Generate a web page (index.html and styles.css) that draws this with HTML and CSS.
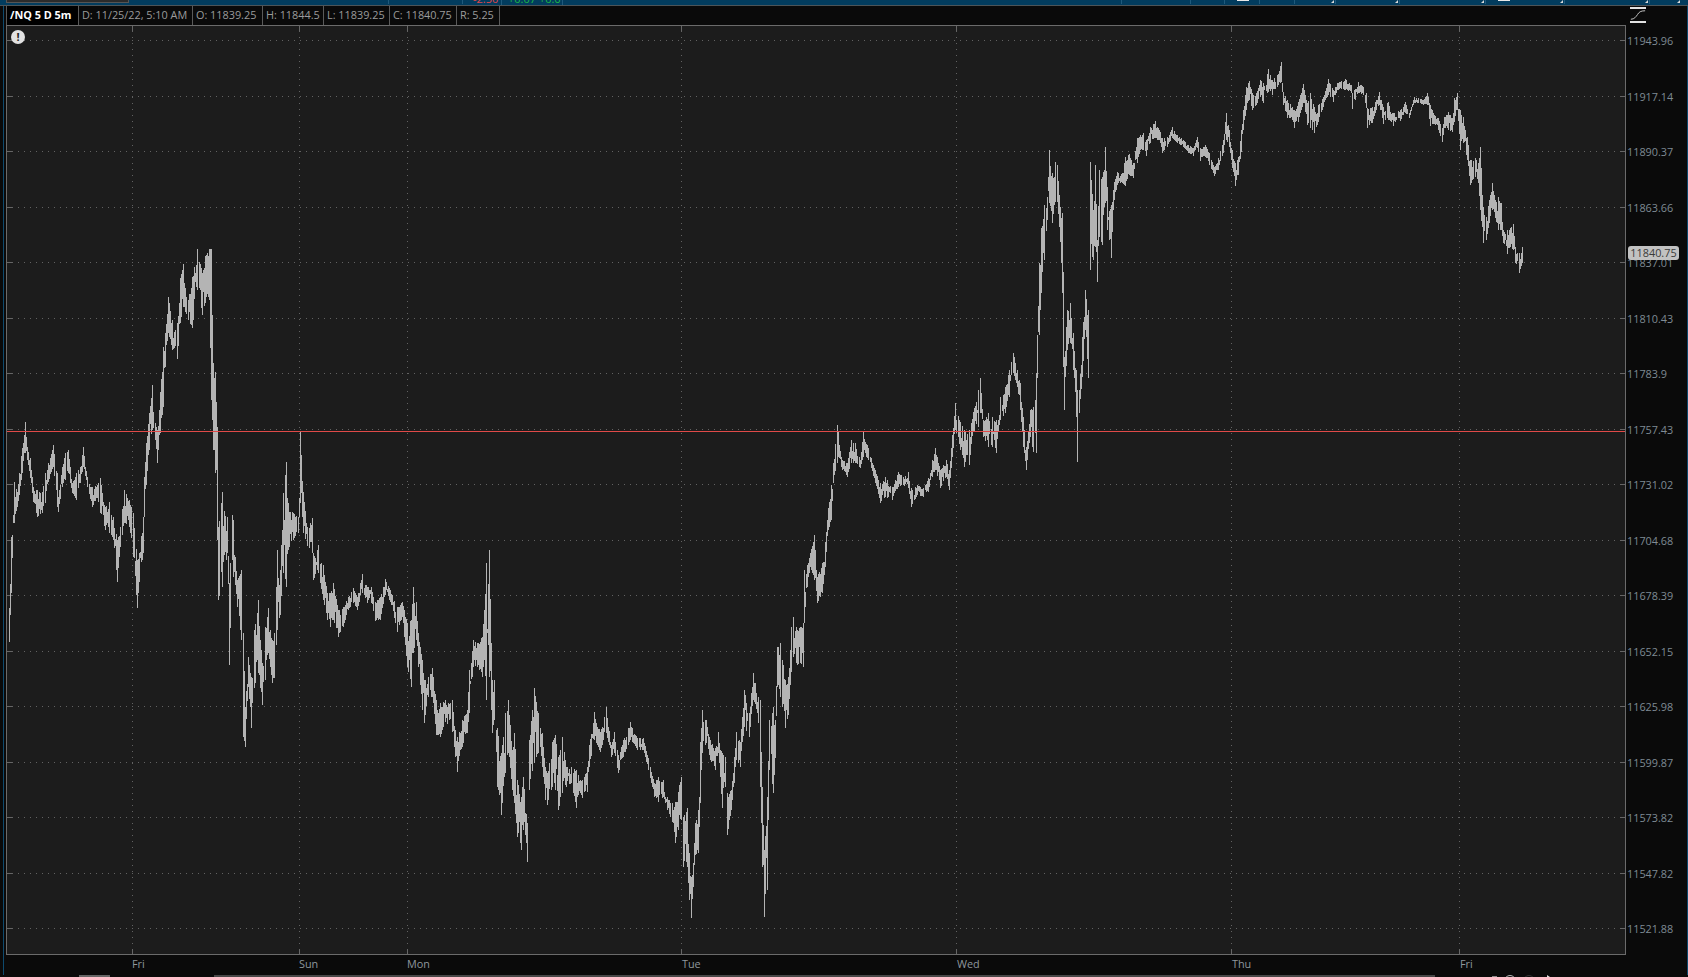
FILE: index.html
```html
<!DOCTYPE html>
<html lang="en">
<head>
<meta charset="utf-8">
<title>/NQ 5 D 5m</title>
<link rel="stylesheet" href="styles.css">
</head>
<body>
<div class="strip">
  <div class="strip-knob"></div>
  <span class="cell s1"></span>
  <span class="cell s2"></span>
  <span class="cell s3 q-red">-2.50</span>
  <span class="cell s4 q-green">+0.07 +0.6</span>
  <span class="cell s5"></span>
  <span class="cell s6"></span>
  <span class="cell s7"></span>
  <span class="cell s8 bar"></span>
  <span class="cell s9"></span>
  <span class="cell s10 mark"></span>
  <span class="cell s11 mark"></span>
  <span class="cell s12 mark"></span>
  <span class="cell s13 bar mark"></span>
  <span class="cell s14 mark"></span>
  <span class="cell s15 mark"></span>
</div>
<div class="main">
  <div class="gutter"></div>
  <div class="chart-col">
    <div class="legend">
      <span class="lg lg-sym">/NQ 5 D 5m</span>
      <span class="lg w-d">D: 11/25/22, 5:10 AM</span>
      <span class="lg w-o">O: 11839.25</span>
      <span class="lg w-h">H: 11844.5</span>
      <span class="lg w-l">L: 11839.25</span>
      <span class="lg w-c">C: 11840.75</span>
      <span class="lg w-r">R: 5.25</span>
    </div>
    <div class="frame">
      <svg id="chart" class="chart" viewBox="7 26 1618 928" width="1618" height="928" aria-hidden="true"></svg>
      <span class="alert">!</span>
    </div>
    <div class="times">
      <span>Fri</span><span>Sun</span><span>Mon</span><span>Tue</span><span>Wed</span><span>Thu</span><span>Fri</span>
    </div>
  </div>
  <div class="axis">
    <svg class="axis-icon" viewBox="0 0 18 17" width="16" height="16" preserveAspectRatio="none" aria-hidden="true">
      <path d="M0 1H18M0 16H18" fill="none" stroke="#e2e2e2" stroke-width="2"/>
      <path d="M1 13C5 13 6.500 10.500 8.500 8C10 5.500 12 4 17 4" fill="none" stroke="#cfcfcf" stroke-width="1"/>
    </svg>
    <span class="price">11943.96</span>
    <span class="price">11917.14</span>
    <span class="price">11890.37</span>
    <span class="price">11863.66</span>
    <span class="price">11837.01</span>
    <span class="price">11810.43</span>
    <span class="price">11783.9</span>
    <span class="price">11757.43</span>
    <span class="price">11731.02</span>
    <span class="price">11704.68</span>
    <span class="price">11678.39</span>
    <span class="price">11652.15</span>
    <span class="price">11625.98</span>
    <span class="price">11599.87</span>
    <span class="price">11573.82</span>
    <span class="price">11547.82</span>
    <span class="price">11521.88</span>
    <span class="last">11840.75</span>
  </div>
</div>
<div class="scroll">
  <span class="thumb"></span>
  <span class="track"></span>
  <svg class="scroll-icons" viewBox="0 0 70 2" width="70" height="2" aria-hidden="true">
    <path d="M12 1.500H17" stroke="#888" fill="none"/>
    <circle cx="30" cy="6" r="5.500" fill="none" stroke="#bbb"/>
    <circle cx="49" cy="6" r="5.500" fill="none" stroke="#333"/>
    <path d="M67 0L70 2H67Z" fill="#ddd"/>
  </svg>
</div>
<script src="chart.js"></script>
</body>
</html>
```
FILE: styles.css
```css
* { box-sizing: border-box; }
html, body { margin: 0; height: 100%; }
body {
  width: 1688px; height: 977px; overflow: hidden;
  background: #0a0a0a; color: #9a9a9a;
  font: 10.85px/1 "Open Sans", "Noto Sans", sans-serif;
  display: flex; flex-direction: column;
}
.strip {
  height: 6px; flex: none; background: #023c5e; display: flex; overflow: hidden;
  border-bottom: 1px solid #4c5458; padding-left: 6px;
}
.strip-knob { width: 123px; height: 3px; background: #2b2b2b; border: 1px solid #555; border-top: 0; flex: none; }
.cell { position: relative; height: 5px; border-right: 1px solid #1f5a7c; flex: none; line-height: 4px; margin-top: -1px; padding-top: 0; overflow: visible; white-space: nowrap; }
.strip .q-red, .strip .q-green { display: block; margin-top: -3px; height: 8px; font-size: 11px; }
.s1 { width: 260px; }
.s2 { width: 74px; }
.s3 { width: 39px; padding-left: 10px; }
.s4 { width: 61px; padding-left: 6px; }
.s5 { width: 559px; }
.s6 { width: 69px; }
.s7 { width: 34px; }
.s8 { width: 35px; }
.s9 { width: 35px; }
.s10 { width: 41px; }
.s11 { width: 64px; }
.s12 { width: 86px; }
.s13 { width: 79px; }
.s14 { width: 85px; }
.s15 { width: 31px; border-right: 0; }
.q-red { color: #e0484a; }
.q-green { color: #1fb846; }
.mark::after {
  content: ""; position: absolute; right: 1px; top: 1px;
  border-style: solid; border-width: 0 0 3px 3px; border-color: transparent transparent #d8d8d8 transparent;
}
.bar::before { content: ""; position: absolute; left: 12px; top: 1px; width: 12px; height: 1px; background: #e8e8e8; }

.main { flex: none; height: 969px; display: flex; }
.gutter { width: 6px; flex: none; background: linear-gradient(to right, #0a0a0a 3px, #0e4a6e 3px, #0e4a6e 4px, #0a0a0a 4px); }
.chart-col { width: 1620px; flex: none; display: flex; flex-direction: column; }

.legend { height: 19px; flex: none; display: flex; align-items: stretch; background: #0a0a0a; border-left: 1px solid #5a5a5a; }
.lg { display: flex; align-items: center; padding: 0 0 0 3px; border-right: 1px solid #5a5a5a; color: #9b9b9b; white-space: nowrap; flex: none; }
.lg-sym { width: 72px; color: #fff; font-weight: 700; background: #000; }
.w-d { width: 114px; } .w-o { width: 70px; } .w-h { width: 61px; } .w-l { width: 66px; } .w-c { width: 67px; } .w-r { width: 43px; }

.frame { position: relative; height: 930px; flex: none; background: #1c1c1c; border: 1px solid #6b6b6b; }
.chart { display: block; }
.alert {
  position: absolute; left: 4px; top: 4px; width: 14px; height: 14px; border-radius: 50%;
  background: #e2e2e2; color: #222; font-weight: 700; font-size: 11px; line-height: 14px; text-align: center;
}

.times {
  height: 20px; flex: none; display: grid; padding: 0 0 1px 126px; align-items: center;
  grid-template-columns: 167px 108px 275px 275px 275px 228px 100px; color: #8e979d;
}

.axis { position: relative; flex: none; width: 62px; padding-top: 8px; padding-left: 1px; display: flex; flex-direction: column; border-right: 1px solid #0e4a6e; }
.axis-icon { position: absolute; left: 4px; top: 1px; }
.price { height: 55.5px; flex: none; display: flex; align-items: center; color: #7f8b94; }
.last {
  position: absolute; left: 2px; top: 240px; width: 51px; height: 14px; border-radius: 3px;
  background: #c2c2c2; color: #3a3a3a; line-height: 14px; text-align: center;
}

.scroll { height: 2px; flex: none; display: flex; overflow: hidden; padding-left: 79px; }
.thumb { width: 31px; height: 2px; background: #666; flex: none; margin-right: 104px; }
.track { width: 1221px; height: 2px; background: #474747; flex: none; margin-right: 45px; }
.scroll-icons { flex: none; }
```
FILE: chart.js
```js
(function () {
  var NS = 'http://www.w3.org/2000/svg';
  var svg = document.getElementById('chart');
  // [x, high y, low y] envelope of the 5 minute bars, in page pixels
  var K = [
    [9,608,642],[11,537,593],[13,515,523],[14,482,523],[17,492,507],[19,473,495],[22,448,473],[25,422,453],[27,447,460],[30,458,478],
    [33,487,502],[37,490,517],[42,492,513],[45,473,503],[48,463,482],[53,445,467],[57,473,507],[58,497,512],[62,467,487],[65,453,480],
    [68,450,473],[72,483,493],[76,473,500],[80,467,483],[83,447,467],[87,477,487],[92,487,507],[97,485,498],[100,478,513],[105,507,530],
    [109,502,533],[113,517,540],[117,540,582],[120,527,547],[124,490,523],[129,500,527],[133,513,557],[137,560,608],[139,553,582],[143,517,553],
    [144,477,517],[146,443,485],[149,413,450],[152,385,430],[155,423,440],[157,430,463],[160,392,433],[163,347,407],[165,333,367],[168,297,333],
    [172,320,350],[177,323,359],[180,278,323],[183,264,307],[188,300,320],[192,277,328],[197,249,290],[202,273,315],[205,256,303],[209,249,300],
    [211,249,400],[213,363,450],[215,372,473],[217,427,540],[218,527,600],[222,492,587],[227,517,553],[229,583,665],[232,515,560],[233,520,577],
    [237,580,607],[241,570,640],[243,633,737],[245,707,747],[248,657,687],[251,677,728],[254,630,688],[258,600,673],[262,663,705],[265,627,680],
    [268,608,653],[272,640,683],[274,633,678],[277,550,630],[280,570,615],[283,493,573],[286,462,587],[288,503,550],[293,513,540],[298,517,533],
    [300,432,503],[303,492,533],[307,527,546],[312,518,553],[313,553,580],[318,545,573],[323,565,600],[327,593,620],[330,593,627],[333,583,620],
    [338,610,637],[343,607,627],[348,597,610],[353,588,603],[357,597,610],[362,574,593],[367,587,603],[371,587,603],[375,602,621],[380,597,620],
    [385,579,595],[390,590,602],[397,607,632],[402,602,617],[407,623,667],[411,620,687],[413,587,653],[416,602,640],[418,633,667],[422,660,710],
    [424,680,723],[428,677,697],[432,668,697],[436,700,735],[440,703,737],[445,700,722],[452,700,732],[455,730,757],[457,737,772],[462,720,747],
    [467,710,733],[469,670,713],[473,640,667],[477,643,667],[482,637,677],[484,610,660],[486,563,700],[489,550,677],[492,680,733],[494,680,720],
    [497,728,787],[501,753,815],[505,713,773],[508,700,753],[512,750,790],[514,733,803],[517,780,837],[521,797,850],[523,777,830],[527,823,862],
    [529,740,790],[534,688,763],[538,713,753],[542,733,767],[545,767,800],[547,773,805],[552,742,787],[555,735,790],[558,757,810],[562,737,793],
    [566,767,787],[571,767,783],[576,770,808],[580,780,793],
    [582,780,798],[587,767,792],[589,745,767],[594,712,740],[600,732,752],[606,707,733],[611,745,757],[614,732,753],[618,755,773],[623,740,757],
    [630,722,740],[637,738,750],[643,738,750],[648,758,770],[654,783,797],[658,777,802],[663,780,797],[667,797,810],[672,803,822],[675,802,843],
    [681,777,820],[683,817,867],[687,808,867],[689,853,900],[691,877,918],[693,863,887],[695,823,855],[698,810,853],[700,742,803],[702,710,753],
    [706,720,743],[710,740,760],[715,748,770],[718,732,753],[722,753,808],[725,757,787],[727,793,835],[731,790,810],[734,757,783],[736,732,760],
    [740,742,767],[744,690,727],[749,713,737],[753,673,700],[758,697,723],[760,700,787],[762,787,867],[764,850,917],[767,797,890],[769,720,770],
    [773,707,793],[775,720,758],[777,647,687],[780,643,697],[785,680,728],[788,677,715],[791,627,672],[793,617,657],[797,630,665],[800,627,663],
    [803,623,667],[804,570,623],[807,565,587],[810,553,567],[814,535,580],[817,577,603],[822,563,593],[825,542,567],[828,508,530],
    [831,485,520],[833,463,483],[837,425,463],[842,460,470],[847,463,477],[851,440,463],[855,443,463],[860,460,468],[863,432,457],[868,448,460],
    [875,470,483],[880,483,503],[885,477,497],[892,487,500],[898,472,487],[903,477,485],[908,472,488],[911,488,507],[917,485,495],[923,488,497],
    [928,478,492],[932,460,477],[935,448,470],[940,470,488],[946,460,477],[949,470,490],[952,435,457],[955,403,430],[960,422,450],[964,430,467],
    [969,430,465],[973,412,432],[978,390,427],[980,378,413],[983,420,437],[988,413,447],[992,417,447],[996,420,453],[1000,397,420],[1005,387,413],
    [1009,370,397],[1013,353,373],[1017,370,387],[1020,383,410],[1023,417,447],[1026,447,470],[1030,410,437],[1033,407,452],[1036,373,453],[1037,335,378],
    [1039,263,335],[1041,228,293],[1044,205,260],[1047,197,220],[1049,150,203],[1052,173,223],[1055,162,202],[1057,165,202],[1060,207,242],[1062,213,293],
    [1063,272,367],[1064,357,410],[1067,310,350],[1070,303,343],[1073,333,370],[1076,370,417],[1077,390,462],[1079,390,413],[1082,337,377],[1085,290,330],
    [1088,310,378],[1090,162,270],[1093,210,260],[1095,165,247],[1097,240,282],[1099,170,237],[1102,177,245],[1105,147,203],[1107,187,230],
    [1111,205,258],[1114,182,200],[1117,172,185],[1122,173,183],[1125,157,186],[1129,154,175],[1133,163,178],[1137,138,163],[1140,135,150],[1143,133,150],
    [1146,140,156],[1150,127,143],[1155,121,138],[1160,132,143],[1162,138,153],[1167,137,147],[1172,127,138],[1177,135,143],[1183,140,147],[1188,145,153],
    [1193,148,156],[1197,137,148],[1200,148,161],[1205,145,157],[1209,153,165],[1214,167,176],[1218,158,170],[1223,140,153],[1226,113,140],[1229,130,147],
    [1232,150,168],[1235,163,186],[1238,157,175],[1241,130,152],[1243,110,130],[1246,87,110],[1249,81,100],[1252,93,110],[1256,93,105],[1260,80,97],
    [1263,83,103],[1268,69,92],[1272,80,95],[1277,75,87],[1281,62,82],[1283,92,105],[1287,100,118],[1292,107,120],[1294,110,128],[1298,102,122],
    [1303,84,103],[1307,103,125],[1310,93,128],[1314,107,133],[1318,105,122],[1323,97,107],[1328,79,95],[1333,90,102],[1337,83,90],[1345,79,90],
    [1351,85,93],[1352,93,109],[1358,82,93],[1363,87,95],[1366,93,108],[1367,108,128],[1372,107,123],[1375,102,113],[1379,92,105],[1383,107,124],
    [1388,102,120],[1393,113,126],[1400,110,121],[1405,102,113],[1409,113,118],[1414,97,103],[1418,98,103],[1423,100,105],[1427,93,105],[1430,105,126],
    [1434,115,124],[1438,118,130],[1442,128,142],[1444,117,128],[1448,112,130],[1452,118,132],[1454,98,122],[1457,93,110],[1460,110,150],[1463,117,143],
    [1467,137,160],[1470,160,185],[1475,158,177],[1478,163,183],[1480,147,210],[1483,207,243],[1486,217,240],[1489,200,223],[1492,183,210],[1496,202,222],
    [1498,197,230],[1501,203,230],[1503,230,243],[1507,230,254],[1510,228,247],[1513,224,250],[1515,247,263],[1519,253,273],[1522,247,263]
  ];

  var seed = 20221125;
  function rnd() {
    seed = (seed * 1664525 + 1013904223) >>> 0;
    return seed / 4294967296;
  }

  function el(name, attrs) {
    var n = document.createElementNS(NS, name);
    for (var a in attrs) n.setAttribute(a, attrs[a]);
    svg.appendChild(n);
    return n;
  }

  // grid
  var hs = [], i;
  for (i = 0; i < 17; i++) hs.push(Math.round(40 + 55.5 * i) + 0.5);
  var vs = [132.5, 299.5, 407.5, 681.5, 956.5, 1231.5, 1459.5];
  var dots = '', ticks = '';
  hs.forEach(function (y) {
    dots += 'M12 ' + y + 'H1620';
    ticks += 'M7 ' + y + 'H12M1620 ' + y + 'H1625';
  });
  vs.forEach(function (x) {
    dots += 'M' + x + ' 31V949';
    ticks += 'M' + x + ' 26V31M' + x + ' 949V954';
  });
  el('path', { d: dots, fill: 'none', stroke: '#626262', 'stroke-width': 1, 'stroke-dasharray': '1 5', 'shape-rendering': 'crispEdges' });
  el('path', { d: ticks, fill: 'none', stroke: '#666', 'stroke-width': 1, 'shape-rendering': 'crispEdges' });

  // bars: one pixel wide, with a gap every eleven columns
  var d = '', j = 0;
  for (var x = 9; x <= 1522; x++) {
    while (j < K.length - 2 && K[j + 1][0] <= x) j++;
    var a = K[j], b = K[j + 1];
    var isKey = x === a[0] || x === b[0];
    if (!isKey && x % 11 === 0) continue;
    var f = (x - a[0]) / (b[0] - a[0]);
    var t = a[1] + (b[1] - a[1]) * f;
    var u = a[2] + (b[2] - a[2]) * f;
    var s = u - t;
    if (!isKey) {
      t += rnd() * rnd() * s * 0.6;
      u -= rnd() * rnd() * s * 0.6;
      if (u - t < 3) u = t + 3;
    }
    d += 'M' + (x + 0.5) + ' ' + Math.round(t) + 'V' + Math.round(u);
  }
  el('path', { d: d, fill: 'none', stroke: '#b4b4b4', 'stroke-width': 1, 'shape-rendering': 'crispEdges' });

  // reference line
  el('path', { d: 'M7 431.5H1625', fill: 'none', stroke: '#e04a48', 'stroke-width': 1, 'shape-rendering': 'crispEdges' });
})();
```
